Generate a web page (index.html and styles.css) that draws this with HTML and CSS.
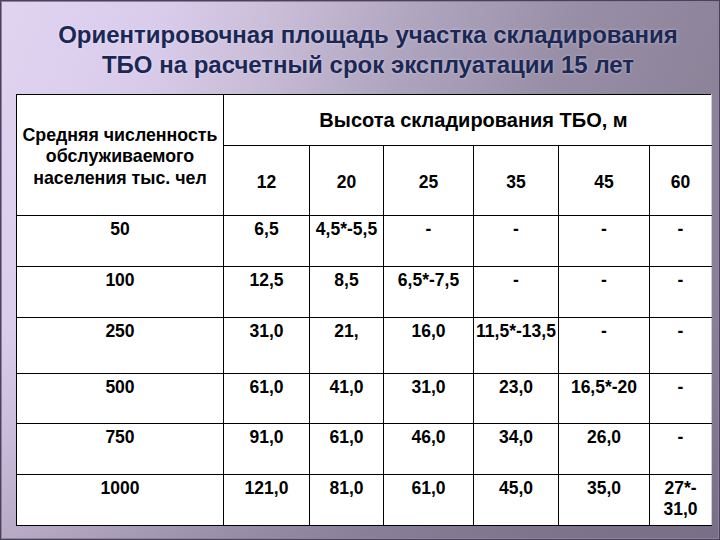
FILE: index.html
```html
<!DOCTYPE html>
<html lang="ru">
<head>
<meta charset="utf-8">
<title>ТБО</title>
<link rel="stylesheet" href="styles.css">
</head>
<body>
<div class="slide">
  <h1 class="title">Ориентировочная площадь участка складирования<br>ТБО на расчетный срок эксплуатации 15 лет</h1>
  <table class="grid">
    <colgroup>
      <col class="c0"><col class="c1"><col class="c2"><col class="c3"><col class="c4"><col class="c5"><col class="c6">
    </colgroup>
    <tr class="h1">
      <th class="lead" rowspan="2">Средняя численность обслуживаемого населения тыс. чел</th>
      <th class="span" colspan="6">Высота складирования ТБО, м</th>
    </tr>
    <tr class="h2">
      <th>12</th><th>20</th><th>25</th><th>35</th><th>45</th><th>60</th>
    </tr>
    <tr class="r"><td>50</td><td>6,5</td><td>4,5*-5,5</td><td>-</td><td>-</td><td>-</td><td>-</td></tr>
    <tr class="r"><td>100</td><td>12,5</td><td>8,5</td><td>6,5*-7,5</td><td>-</td><td>-</td><td>-</td></tr>
    <tr class="r tall"><td>250</td><td>31,0</td><td>21,</td><td>16,0</td><td>11,5*-13,5</td><td>-</td><td>-</td></tr>
    <tr class="r short"><td>500</td><td>61,0</td><td>41,0</td><td>31,0</td><td>23,0</td><td>16,5*-20</td><td>-</td></tr>
    <tr class="r"><td>750</td><td>91,0</td><td>61,0</td><td>46,0</td><td>34,0</td><td>26,0</td><td>-</td></tr>
    <tr class="r"><td>1000</td><td>121,0</td><td>81,0</td><td>61,0</td><td>45,0</td><td>35,0</td><td class="wrap">27*-<br>31,0</td></tr>
  </table>
</div>
</body>
</html>
```
FILE: styles.css
```css
html, body {
  margin: 0;
  padding: 0;
}
body {
  width: 720px;
  height: 540px;
  overflow: hidden;
  font-family: "Liberation Sans", Arial, sans-serif;
}
.slide {
  box-sizing: border-box;
  width: 720px;
  height: 540px;
  border: 1px solid #4a4258;
  box-shadow: inset 0 0 0 1px #8d83a0;
  background:
    linear-gradient(180deg, rgba(0,0,0,0) 60%, rgba(60,50,80,0.18) 100%),
    linear-gradient(112deg, #e0d4f1 0%, #d9cceb 18%, #c9bdd7 30%, #b0a5bf 45%, #988fa7 62%, #8c8399 80%, #857c93 100%);
  padding: 19px 9px 0 15px;
  display: flex;
  flex-direction: column;
}
.title {
  margin: 0;
  height: 74px;
  font-size: 24px;
  line-height: 30px;
  font-weight: bold;
  text-align: center;
  color: #1b2856;
  padding-left: 10px;
  text-shadow: 0 0 3px rgba(255,255,255,0.45);
}
.grid {
  border-collapse: collapse;
  table-layout: fixed;
  width: 695px;
  background: #ffffff;
  border-top: 1px solid #000;
  border-left: 1px solid #000;
  border-bottom: 1px solid #000;
  border-right: 1px solid #c8c4cc;
  color: #000;
}
.c0 { width: 207px; }
.c1 { width: 86px; }
.c2 { width: 74px; }
.c3 { width: 90px; }
.c4 { width: 85px; }
.c5 { width: 91px; }
.c6 { width: 62px; }
.grid th, .grid td {
  border: 1px solid #000;
  padding: 0;
  text-align: center;
  font-weight: bold;
  font-size: 17.5px;
  line-height: 20px;
}
.grid tr > :last-child { border-right-color: #d0ccd4; }
.grid tr:last-child > * { border-bottom-color: #000; }
.h1 { height: 51px; }
.h2 { height: 70px; }
.grid .h2 th { vertical-align: middle; padding-top: 2px; }
.grid th.lead {
  font-size: 17.8px;
  line-height: 21.5px;
  vertical-align: middle;
  padding-top: 4px;
}
.grid th.span {
  font-size: 20px;
  vertical-align: middle;
  padding-left: 12px;
}
.r { height: 51px; }
.grid .r td { vertical-align: top; padding-top: 3px; }
.r.tall { height: 56px; }
.r.short { height: 50px; }
.grid .r td.wrap { line-height: 21px; padding-top: 3px; }
```
